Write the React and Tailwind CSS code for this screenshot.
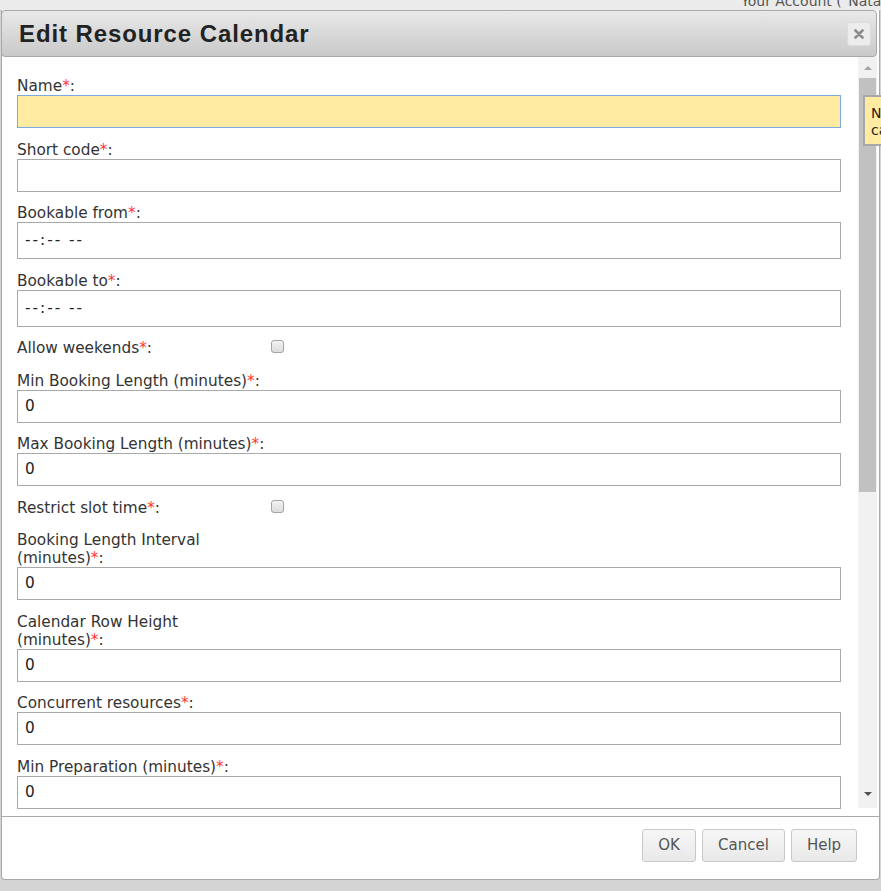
const fields = [
  { label: 'Name', type: 'name' },
  { label: 'Short code', type: 'text', value: '' },
  { label: 'Bookable from', type: 'time' },
  { label: 'Bookable to', type: 'time' },
  { label: 'Allow weekends', type: 'check' },
  { label: 'Min Booking Length (minutes)', type: 'text', value: '0' },
  { label: 'Max Booking Length (minutes)', type: 'text', value: '0' },
  { label: 'Restrict slot time', type: 'check' },
  { label: 'Booking Length Interval (minutes)', type: 'text', value: '0' },
  { label: 'Calendar Row Height (minutes)', type: 'text', value: '0' },
  { label: 'Concurrent resources', type: 'text', value: '0' },
  { label: 'Min Preparation (minutes)', type: 'text', value: '0' },
  { label: 'Max Preparation (minutes)', type: 'text', value: '0' },
];

function Label({ text }) {
  return (
    <span className="block w-[248px] leading-[18px]">
      {text}
      <span className="text-[#ff3333]">*</span>:
    </span>
  );
}

function Field({ field }) {
  if (field.type === 'check') {
    return (
      <div className="flex h-[20px] items-start">
        <Label text={field.label} />
        <span className="ml-[6px] mt-px block h-[13px] w-[13px] rounded-[3px] border border-[#a3a3a3] bg-gradient-to-b from-[#f4f4f4] to-[#dadada]" />
      </div>
    );
  }

  let input;
  if (field.type === 'name') {
    input = <div className="h-[33px] w-[824px] border border-[#7da9e3] bg-[#ffeba1]" />;
  } else if (field.type === 'time') {
    input = (
      <div className="flex h-[37px] w-[824px] items-center border border-[#a9a9a9] pl-[7px] tracking-[2px] text-[#222]">
        --:-- --
      </div>
    );
  } else {
    input = (
      <div className="flex h-[33px] w-[824px] items-center border border-[#a9a9a9] pl-[7px] text-[#222]">
        {field.value}
      </div>
    );
  }

  return (
    <div>
      <Label text={field.label} />
      {input}
    </div>
  );
}

function Button({ children, width }) {
  return (
    <button
      className={`flex h-[33px] items-center justify-center rounded-[3px] border border-[#c8c8c8] bg-gradient-to-b from-[#f6f6f6] to-[#e9e9e9] text-[15px] text-[#555] ${width}`}
    >
      {children}
    </button>
  );
}

export default function App() {
  return (
    <div className="relative h-[891px] w-[881px] overflow-hidden bg-[#d4d4d4] font-['DejaVu_Sans',Verdana,sans-serif] text-[15.3px] text-[#333]">
      {/* page strip behind the dialog */}
      <div className="h-[10px] overflow-hidden bg-[#ebebeb]">
        <div className="-mt-[7px] whitespace-nowrap pl-[741px] text-[14px] leading-[16px] text-[#555]">
          Your Account ("Natalie")
        </div>
      </div>

      <div className="ml-px flex h-[870px] w-[879px] flex-col rounded-b-[4px] border-x border-b border-[#a8a8a8] bg-white">
        {/* title bar */}
        <div className="-ml-px mr-[2px] flex h-[47px] shrink-0 items-center justify-between rounded-[4px] border border-[#a8a8a8] bg-gradient-to-b from-[#e9e9e9] to-[#c9c9c9] pl-[17px] pr-[5px]">
          <span className="font-['Liberation_Sans',Arial,sans-serif] text-[24px] font-bold tracking-[0.9px] text-[#222]">
            Edit Resource Calendar
          </span>
          <span className="flex h-[24px] w-[24px] items-center justify-center rounded-[3px] border border-[#dcdcdc] bg-[#ececec]">
            <svg width="10" height="10" viewBox="0 0 10 10">
              <path d="M1.5 1.5 L8.5 8.5 M8.5 1.5 L1.5 8.5" stroke="#8a8a8a" strokeWidth="2.6" strokeLinecap="round" />
            </svg>
          </span>
        </div>

        {/* scrolling body */}
        <div className="flex h-[759px] shrink-0">
          <div className="flex-1 overflow-hidden pl-[15px] pt-[20px]">
            <div className="flex flex-col gap-[12.5px]">
              {fields.map((f) => (
                <Field key={f.label} field={f} />
              ))}
            </div>
          </div>
          <div className="mr-[2px] flex h-[751px] w-[19px] flex-col bg-[#f1f1f1] px-px">
            <div className="flex h-[21px] items-start justify-center pt-[9px]">
              <span className="block h-0 w-0 border-x-[4px] border-b-[4px] border-x-transparent border-b-[#a3a3a3]" />
            </div>
            <div className="h-[414px] bg-[#c1c1c1]" />
            <div className="flex-1" />
            <div className="flex h-[16px] items-start justify-center">
              <span className="block h-0 w-0 border-x-[4px] border-t-[4px] border-x-transparent border-t-[#505050]" />
            </div>
          </div>
        </div>

        {/* button pane */}
        <div className="flex flex-1 justify-end gap-[6px] border-t border-[#aaaaaa] pr-[22px] pt-[12px]">
          <Button width="w-[54px]">OK</Button>
          <Button width="w-[83px]">Cancel</Button>
          <Button width="w-[66px]">Help</Button>
        </div>
      </div>

      {/* validation tooltip */}
      <div className="absolute left-[863px] top-[95px] h-[51px] w-[60px] overflow-hidden border-2 border-[#a8a8a8] bg-[#ffeba1] pl-[6px] pt-[8px] text-[14px] leading-[17px] text-[#222]">
        <div className="whitespace-nowrap">Name</div>
        <div className="whitespace-nowrap">cannot be empty</div>
      </div>
    </div>
  );
}
